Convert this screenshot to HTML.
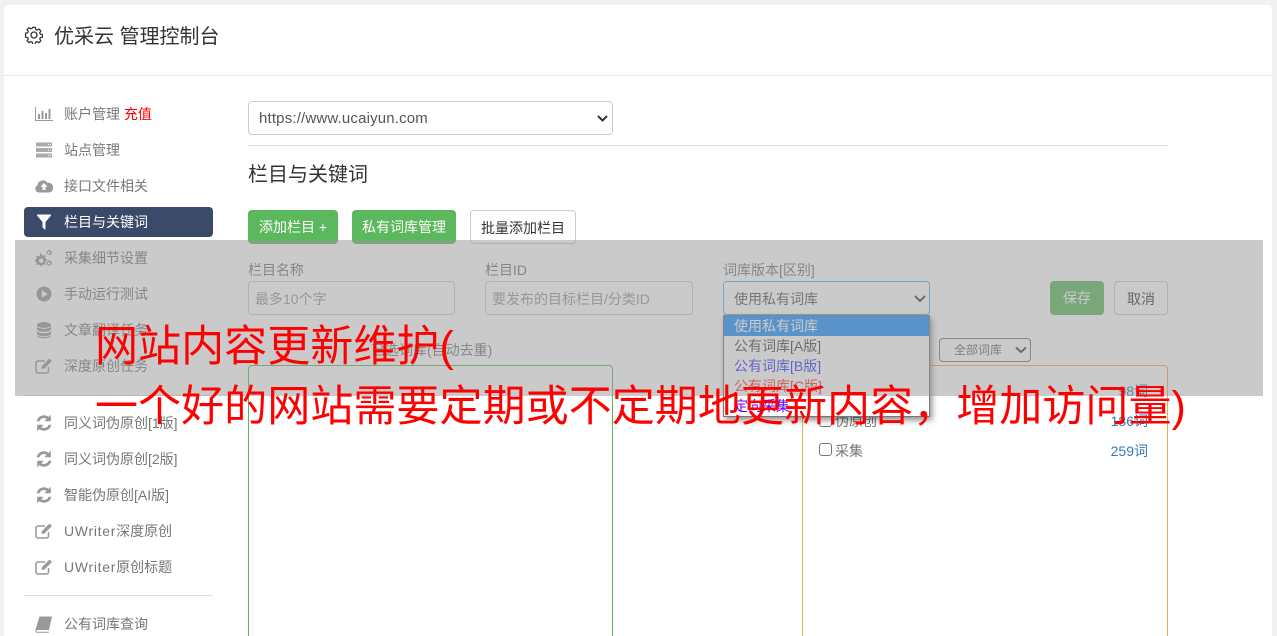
<!DOCTYPE html>
<html lang="zh-CN"><head><meta charset="utf-8"><title>优采云 管理控制台</title>
<style>
html,body{margin:0;padding:0;width:1277px;height:636px;overflow:hidden;background:#f1f1f1}
body{font-family:"Liberation Sans","Noto Sans CJK SC",sans-serif;font-size:14px;color:#555;position:relative}
*{box-sizing:border-box}
.a{position:absolute;white-space:nowrap}
#card{position:absolute;left:4px;top:5px;width:1268px;height:640px;background:#fff;border-radius:4px}
.nav{position:absolute;left:64px;line-height:20px;height:20px;color:#777;white-space:nowrap}
.nav b{font-weight:normal;letter-spacing:.7px}
.ic{position:absolute;left:35px;width:18px;height:18px;fill:#999}
.line{position:absolute;background:#ddd;height:1px}
.box{position:absolute;border:1px solid #ccc;border-radius:4px;background:#fff;color:#999;padding-left:10px;white-space:nowrap}
.btn{position:absolute;border-radius:4px;text-align:center;white-space:nowrap}
.green{background:#5cb85c;color:#fff}
.chev{position:absolute;fill:none;stroke:#444;stroke-width:2}
.opt{position:absolute;left:724px;width:205px;height:20px;line-height:20px;padding-left:10px;white-space:nowrap;color:#444}
.red{position:absolute;left:95px;font-size:43.07px;line-height:60px;color:#f00;white-space:nowrap;z-index:20}
</style></head><body>
<div id="card"></div>

<svg class="a" style="left:25px;top:26px" width="18" height="18" viewBox="0 0 18 18" fill="none" stroke="#333" stroke-width="1.300"><path d="M7.600 1h2.800l.4 2.200 1.500.7 1.900-1.200 2 2-1.200 1.900.7 1.500 2.200.4v2.800l-2.200.4-.7 1.500 1.200 1.900-2 2-1.900-1.200-1.500.7-.4 2.200H7.600l-.4-2.200-1.500-.7-1.900 1.200-2-2 1.200-1.900-.7-1.500-2.200-.4V7.100l2.200-.4.7-1.500L1.700 3.300l2-2 1.900 1.200 1.500-.7z" transform="translate(.45 .45) scale(.95)"/><circle cx="9" cy="9" r="3"/></svg>
<div class="a" style="left:54px;top:23px;font-size:20px;line-height:28px;color:#333">优采云 管理控制台</div>
<div class="line" style="left:4px;top:75px;width:1268px;background:#e8e8e8"></div>

<!-- sidebar -->
<svg class="ic" style="top:105px" viewBox="0 0 18 18"><path d="M0 2h1v13h17v1H0z"/><path d="M3 9h2v5H3zM6.500 6h2v8h-2zM10 8h2v6h-2zM13.500 4h2v10h-2z"/></svg>
<div class="nav" style="top:104px">账户管理 <span style="color:#f00">充值</span></div>
<svg class="ic" style="top:141px;fill:#aaa" viewBox="0 0 18 18"><path d="M1 1.500h16v4H1zM1 7h16v4H1zM1 12.500h16v4H1z"/><path fill="#fff" d="M13 3h1v1h-1zM15 3h1v1h-1zM13 8.500h1v1h-1zM15 8.500h1v1h-1zM13 14h1v1h-1zM15 14h1v1h-1z"/></svg>
<div class="nav" style="top:140px">站点管理</div>
<svg class="ic" style="top:177px" viewBox="0 0 18 18"><path d="M4 15.500A3.800 3.800 0 0 1 2.500 8.300 5.500 5.500 0 0 1 12.500 5.800 4.800 4.800 0 0 1 14.200 15.500z"/><path fill="#fff" d="M9 6l3.500 3.700h-2v3.300h-3V9.700h-2z"/></svg>
<div class="nav" style="top:176px">接口文件相关</div>
<div class="a" style="left:24px;top:207px;width:189px;height:30px;background:#3a4a68;border-radius:4px"></div>
<svg class="ic" style="top:213px;fill:#fff" viewBox="0 0 18 18"><path d="M2 1.500h14v1L10.500 9v8L7.500 14.500V9L2 2.500z"/></svg>
<div class="nav" style="top:212px;color:#fff">栏目与关键词</div>
<svg class="ic" style="top:249px" viewBox="0 0 18 18"><path fill-rule="evenodd" d="M5 4.500l1.500.1.500 1.500 1.400.6 1.300-.8 1.100 1.100-.8 1.300.6 1.400 1.500.5v1.600l-1.500.5-.6 1.400.8 1.300-1.100 1.100-1.300-.8-1.400.6-.5 1.500H5.400l-.5-1.500-1.400-.6-1.300.8-1.100-1.100.8-1.300L1.300 13 0 12.500v-1.600l1.300-.5.600-1.400-.8-1.300 1.100-1.100 1.300.8 1.400-.6zM6.200 9.500a2.200 2.200 0 1 0 .01 0z"/><path fill-rule="evenodd" d="M14 .5a1 1 0 0 1 1 1l1 .5 1 .5-.5 1 .5 1-1 .7-1 .8h-1.500l-1-.8-1-.7.500-1-.5-1 1-.5 1-.5a1 1 0 0 1 .5-1zM14 2.600a1.200 1.200 0 1 0 .01 0zM14 11a1 1 0 0 1 1 1l1 .5 1 .5-.5 1 .5 1-1 .7-1 .8h-1.500l-1-.8-1-.7.500-1-.5-1 1-.5 1-.5a1 1 0 0 1 .5-1zM14 13.100a1.200 1.200 0 1 0 .01 0z"/></svg>
<div class="nav" style="top:248px">采集细节设置</div>
<svg class="ic" style="top:285px" viewBox="0 0 18 18"><path fill-rule="evenodd" d="M9 1.500a7.500 7.500 0 1 0 .01 0zM6.800 5.200l6 3.800-6 3.800z"/></svg>
<div class="nav" style="top:284px">手动运行测试</div>
<svg class="ic" style="top:321px" viewBox="0 0 18 18"><ellipse cx="9" cy="4" rx="7" ry="3"/><path d="M2 5.500c1.500 3 12.500 3 14 0v3c-1.500 3-12.500 3-14 0zM2 10c1.500 3 12.500 3 14 0v3c-1.500 3-12.500 3-14 0zM2 14.200c1.500 2.500 12.500 2.500 14 0v.8c-1 3-13 3-14 0z"/></svg>
<div class="nav" style="top:320px">文章翻译任务</div>
<svg class="ic" style="top:357px" viewBox="0 0 18 18"><path fill="none" stroke="#999" stroke-width="1.500" d="M13.500 10v4a2 2 0 0 1-2 2H3a2 2 0 0 1-2-2V6a2 2 0 0 1 2-2h7"/><path d="M14.500 1.500l2.500 2.500-7.500 7.500-3 .5.500-3z"/></svg>
<div class="nav" style="top:356px">深度原创任务</div>
<div class="line" style="left:24px;top:395px;width:189px"></div>

<svg class="ic" style="top:414px" viewBox="0 0 18 18"><path stroke="#999" stroke-width=".6" d="M15.500 1.500v5.500H10l2.100-2.100A5 5 0 0 0 4.200 7H2a7.200 7.200 0 0 1 11.700-3.600zM2.500 16.500V11H8l-2.100 2.100A5 5 0 0 0 13.800 11H16a7.200 7.200 0 0 1-11.700 3.600z"/></svg>
<div class="nav" style="top:413px">同义词伪原创[1版]</div>
<svg class="ic" style="top:450px" viewBox="0 0 18 18"><path stroke="#999" stroke-width=".6" d="M15.500 1.500v5.500H10l2.100-2.100A5 5 0 0 0 4.200 7H2a7.200 7.200 0 0 1 11.700-3.600zM2.500 16.500V11H8l-2.100 2.100A5 5 0 0 0 13.800 11H16a7.200 7.200 0 0 1-11.700 3.600z"/></svg>
<div class="nav" style="top:449px">同义词伪原创[2版]</div>
<svg class="ic" style="top:486px" viewBox="0 0 18 18"><path stroke="#999" stroke-width=".6" d="M15.500 1.500v5.500H10l2.100-2.100A5 5 0 0 0 4.200 7H2a7.200 7.200 0 0 1 11.700-3.600zM2.500 16.500V11H8l-2.100 2.100A5 5 0 0 0 13.800 11H16a7.200 7.200 0 0 1-11.700 3.600z"/></svg>
<div class="nav" style="top:485px">智能伪原创[AI版]</div>
<svg class="ic" style="top:522px" viewBox="0 0 18 18"><path fill="none" stroke="#999" stroke-width="1.500" d="M13.500 10v4a2 2 0 0 1-2 2H3a2 2 0 0 1-2-2V6a2 2 0 0 1 2-2h7"/><path d="M14.500 1.500l2.500 2.500-7.500 7.500-3 .5.500-3z"/></svg>
<div class="nav" style="top:521px"><b>UWriter</b>深度原创</div>
<svg class="ic" style="top:558px" viewBox="0 0 18 18"><path fill="none" stroke="#999" stroke-width="1.500" d="M13.500 10v4a2 2 0 0 1-2 2H3a2 2 0 0 1-2-2V6a2 2 0 0 1 2-2h7"/><path d="M14.500 1.500l2.500 2.500-7.500 7.500-3 .5.500-3z"/></svg>
<div class="nav" style="top:557px"><b>UWriter</b>原创标题</div>
<div class="line" style="left:24px;top:595px;width:189px"></div>
<svg class="ic" style="top:615px" viewBox="0 0 18 18"><path d="M4.500 1.500H17l-3 13.500H2.500c-1.500 0-1.500 1.800 0 1.800H14l-.3 1H2C.5 17.800.2 16 .6 14.500z"/></svg>
<div class="nav" style="top:614px">公有词库查询</div>

<!-- top form -->
<div class="box" style="left:248px;top:101px;width:365px;height:34px;line-height:33px;font-size:15px;letter-spacing:.17px;color:#555">https://www.ucaiyun.com</div>
<svg class="chev" style="left:597px;top:114px;stroke:#333" width="11" height="9" viewBox="0 0 11 9"><path d="M1 2l4.500 4.500L10 2"/></svg>
<div class="line" style="left:248px;top:145px;width:920px"></div>
<div class="a" style="left:248px;top:161px;font-size:20px;line-height:28px;color:#333">栏目与关键词</div>
<div class="btn green" style="left:248px;top:210px;width:90px;height:34px;line-height:34px">添加栏目 +</div>
<div class="btn green" style="left:352px;top:210px;width:104px;height:34px;line-height:34px">私有词库管理</div>
<div class="btn" style="left:470px;top:210px;width:106px;height:34px;line-height:34px;border:1px solid #ccc;color:#333;background:#fff">批量添加栏目</div>

<div class="a" style="left:248px;top:260px;line-height:20px;color:#777">栏目名称</div>
<div class="a" style="left:485px;top:260px;line-height:20px;color:#777">栏目ID</div>
<div class="a" style="left:723px;top:260px;line-height:20px;color:#777">词库版本[区别]</div>
<div class="box" style="left:248px;top:281px;width:207px;height:34px;line-height:34px;padding-left:6px">最多10个字</div>
<div class="box" style="left:485px;top:281px;width:208px;height:34px;line-height:34px;padding-left:6px">要发布的目标栏目/分类ID</div>
<div class="box" style="left:723px;top:281px;width:207px;height:34px;line-height:34px;border-color:#66afe9;color:#555">使用私有词库</div>
<svg class="chev" style="left:914px;top:294px;stroke:#444" width="12" height="9" viewBox="0 0 12 9"><path d="M1 2l5 5 5-5"/></svg>
<div class="btn green" style="left:1050px;top:281px;width:54px;height:34px;line-height:34px">保存</div>
<div class="btn" style="left:1114px;top:281px;width:54px;height:34px;line-height:34px;border:1px solid #ccc;color:#333;background:#fff">取消</div>

<div class="a" style="left:371px;top:340px;line-height:20px;color:#777">已选词库(自动去重)</div>
<div class="box" style="left:939px;top:338px;width:92px;height:24px;line-height:23px;font-size:12px;border-color:#777;color:#666;padding-left:14px">全部词库</div>
<svg class="chev" style="left:1015px;top:346px;stroke:#444" width="12" height="8" viewBox="0 0 12 8"><path d="M1 1.500l5 4.500 5-4.500"/></svg>

<div class="a" style="left:248px;top:365px;width:365px;height:300px;border:1px solid #5cb85c;border-radius:4px"></div>
<div class="a" style="left:802px;top:365px;width:366px;height:300px;border:1px solid #f0ad4e;border-radius:4px"></div>
<div class="a" style="right:129px;top:381px;line-height:20px;color:#337ab7">98词</div>
<div class="a" style="left:819px;top:414px;width:13px;height:13px;border:1px solid #777;border-radius:3px;background:#fff"></div>
<div class="a" style="left:835px;top:411px;line-height:20px;color:#777">伪原创</div>
<div class="a" style="right:129px;top:411px;line-height:20px;color:#337ab7">186词</div>
<div class="a" style="left:819px;top:443px;width:13px;height:13px;border:1px solid #777;border-radius:3px;background:#fff"></div>
<div class="a" style="left:835px;top:441px;line-height:20px;color:#777">采集</div>
<div class="a" style="right:129px;top:441px;line-height:20px;color:#337ab7">259词</div>

<!-- dropdown -->
<div class="a" style="left:723px;top:315px;width:207px;height:102px;background:#fff;border:1px solid #777;box-shadow:2px 3px 6px rgba(0,0,0,.45)"></div>
<div class="opt" style="top:316px;height:20px;background:#1e90ff;color:#fff">使用私有词库</div>
<div class="opt" style="top:336px">公有词库[A版]</div>
<div class="opt" style="top:356px;color:#33f">公有词库[B版]</div>
<div class="opt" style="top:376px;color:#f33">公有词库[C版]</div>
<div class="opt" style="top:396px;color:#60f">定向采集</div>

<!-- overlay -->
<div class="a" style="left:15px;top:240px;width:1248px;height:156px;background:rgba(150,150,150,.5);z-index:10"></div>
<div class="red" style="top:317px">网站内容更新维护(</div>
<div class="red" style="top:377px">一个好的网站需要定期或不定期地更新内容，增加访问量)</div>
</body></html>
